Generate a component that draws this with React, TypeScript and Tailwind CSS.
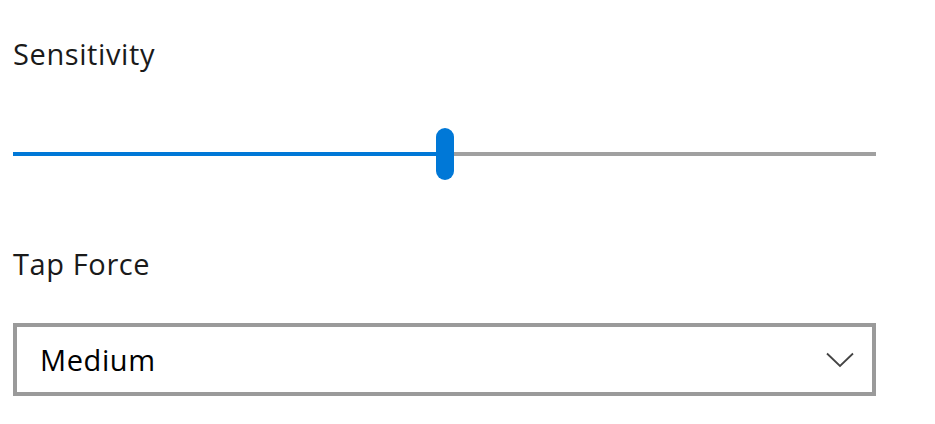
export default function App() {
  const value = 50; // percent along the track

  return (
    <div className="min-h-screen bg-white font-['Open_Sans',sans-serif] text-[#1a1a1a]">
      <div className="w-[863px] ml-[13px] pt-[36px]">
        <div className="text-[29px] leading-[36px] tracking-[0.6px]">Sensitivity</div>

        <div className="relative mt-[56px] h-[52px] flex items-center">
          <div className="flex w-full h-[4px]">
            <div className="h-full bg-[#0078d7]" style={{ width: `${value}%` }} />
            <div className="h-full flex-1 bg-[#a0a0a0]" />
          </div>
          <div
            className="absolute top-0 h-[52px] w-[18px] -ml-[9px] rounded-full bg-[#0078d7]"
            style={{ left: `${value}%` }}
          />
        </div>

        <div className="mt-[66px] text-[29px] leading-[36px] tracking-[0.6px]">Tap Force</div>

        <div className="mt-[41px] h-[73px] border-4 border-[#9a9a9a] flex items-center justify-between pl-[23px] pr-[18px]">
          <span className="text-[29px] leading-[36px] tracking-[0.6px] text-black">Medium</span>
          <svg width="28" height="16" viewBox="0 0 28 16" fill="none">
            <path d="M1 1.5 L14 14 L27 1.5" stroke="#444" strokeWidth="1.8" />
          </svg>
        </div>
      </div>
    </div>
  );
}
